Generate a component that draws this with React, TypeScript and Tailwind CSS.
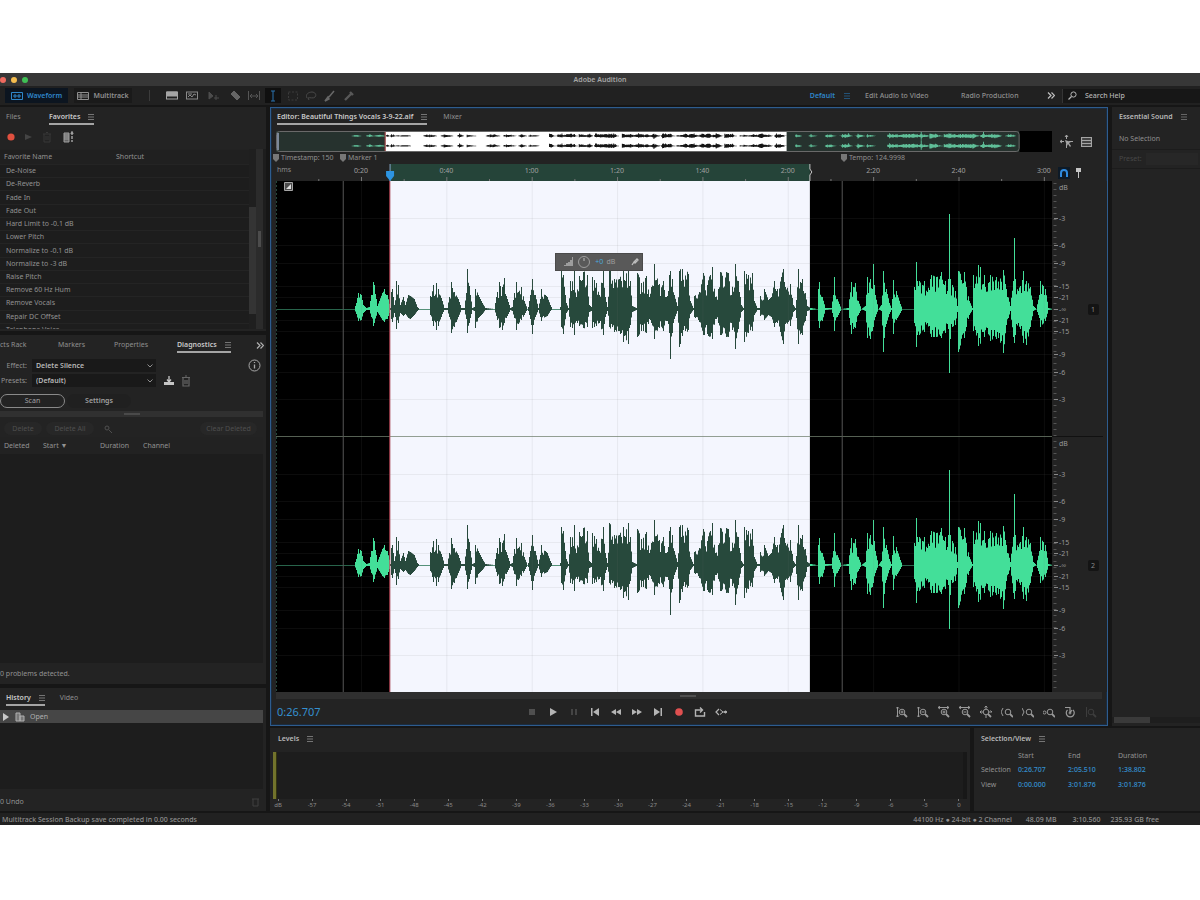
import React from 'react';

type Peak = [x: number, up: number, down: number];

const VIEW = 776;
const SEL_FROM = 114;
const SEL_TO = 534;

// Envelope of the recording: x in the 776 px wide view, height above and below the centre line
const points: Peak[] = [
  [0, 0, 0], [78, 0, 0], [80, 6, 5], [82, 16, 12], [85, 14, 11], [87, 4, 4], [90, 1, 1], [93, 2, 1], [95, 14, 8], [97, 27, 17],
  [98, 24, 14], [101, 3, 3], [103, 8, 6], [106, 16, 11], [108, 20, 13], [111, 14, 10], [114, 1, 1],
  [115, 17, 10], [116, 20, 13], [118, 4, 4], [120, 28, 20], [122, 24, 14], [124, 4, 4], [127, 12, 7], [129, 4, 5],
  [132, 14, 9], [134, 13, 10], [138, 10, 6], [141, 2, 2], [143, 0, 0], [153, 0, 0],
  [154, 13, 6], [157, 24, 17], [160, 26, 21], [162, 20, 17], [166, 8, 5], [168, 1, 1], [171, 1, 1],
  [173, 12, 8], [175, 27, 24], [178, 17, 18], [182, 10, 8], [185, 1, 1], [188, 1, 1], [190, 16, 10], [191, 40, 24],
  [194, 14, 9], [196, 1, 1], [198, 2, 2], [199, 20, 19], [202, 14, 9], [206, 6, 5], [209, 1, 1], [218, 0, 0],
  [220, 12, 7], [223, 27, 19], [226, 22, 21], [228, 31, 14], [230, 13, 9], [234, 1, 1], [236, 2, 2],
  [238, 16, 9], [240, 27, 21], [242, 17, 15], [245, 22, 11], [248, 8, 6], [251, 0, 0], [252, 2, 2],
  [254, 14, 10], [256, 30, 25], [259, 14, 8], [262, 1, 1], [264, 10, 8], [265, 20, 12], [269, 14, 8], [271, 12, 7],
  [274, 4, 2], [276, 0, 0], [283, 0, 0],
  [284, 2, 1], [285, 38, 18], [287, 34, 25], [290, 6, 4], [292, 1, 1], [294, 28, 18], [298, 40, 26], [300, 12, 12],
  [303, 33, 17], [307, 37, 19], [311, 34, 18], [313, 4, 3], [315, 2, 2], [316, 32, 19], [320, 26, 17], [323, 14, 14],
  [327, 38, 26], [329, 12, 8], [331, 2, 2], [333, 42, 18], [338, 30, 23], [343, 30, 22], [347, 38, 33], [352, 42, 35],
  [354, 28, 16], [356, 3, 3], [360, 1, 1], [361, 36, 28], [365, 26, 22], [370, 33, 24], [373, 12, 10],
  [375, 22, 14], [378, 45, 30], [382, 24, 18], [387, 28, 22], [390, 12, 12], [393, 34, 24], [394, 38, 50], [396, 30, 24],
  [398, 14, 10], [401, 3, 2], [403, 38, 38], [406, 40, 27], [412, 35, 21], [414, 8, 5], [417, 1, 1],
  [418, 13, 8], [423, 17, 13], [427, 36, 26], [431, 24, 25], [436, 42, 30], [439, 12, 10], [442, 20, 14], [444, 37, 26],
  [452, 36, 28], [455, 14, 14], [459, 45, 40], [462, 28, 20], [465, 4, 3], [467, 1, 1], [468, 38, 33], [472, 34, 24],
  [476, 36, 22], [478, 8, 6], [481, 1, 1], [483, 1, 1], [484, 13, 7], [488, 20, 11], [492, 9, 6], [495, 12, 8],
  [498, 28, 18], [501, 20, 14], [507, 40, 35], [509, 22, 15], [514, 25, 17], [517, 4, 3], [519, 1, 1],
  [522, 40, 35], [526, 30, 26], [529, 16, 12], [531, 3, 2], [534, 1, 1],
  [541, 0, 0], [542, 20, 12], [543, 27, 19], [546, 12, 12], [549, 1, 1], [555, 1, 0], [557, 14, 8], [558, 32, 22],
  [561, 10, 8], [565, 0, 0], [572, 1, 1], [575, 27, 25], [577, 22, 20], [579, 26, 19], [582, 8, 6], [585, 0, 0],
  [589, 3, 2], [591, 32, 29], [594, 30, 30], [596, 20, 22], [597, 45, 18], [599, 14, 8], [602, 0, 0], [605, 4, 2],
  [607, 38, 43], [610, 20, 15], [613, 6, 5], [615, 1, 1], [617, 29, 25], [620, 18, 11], [624, 5, 4], [626, 0, 0],
  [637, 0, 0], [638, 22, 14], [640, 47, 38], [643, 28, 26], [648, 28, 23], [651, 17, 14], [655, 34, 28], [660, 32, 28],
  [665, 37, 29], [669, 28, 24], [672, 30, 20], [673, 95, 64], [674, 30, 30], [676, 24, 18], [679, 18, 16], [681, 3, 3],
  [682, 38, 43], [688, 37, 29], [690, 22, 18], [693, 8, 6], [696, 1, 1], [697, 34, 22], [702, 44, 37], [708, 34, 28],
  [714, 34, 32], [720, 32, 30], [727, 39, 44], [730, 20, 16], [734, 3, 2], [737, 28, 28], [738, 71, 34], [739, 30, 26],
  [742, 18, 14], [747, 38, 34], [750, 28, 36], [754, 22, 18], [757, 3, 2], [760, 0, 0], [763, 14, 9], [764, 28, 18],
  [769, 20, 12], [772, 1, 1], [776, 0, 0],
];

const hash = (n: number) => {
  const s = Math.sin(n * 127.1) * 43758.5453;
  return s - Math.floor(s);
};

const column = (x: number): [number, number] => {
  let i = points.findIndex((p) => p[0] > x);
  if (i < 1) i = points.length - 1;
  const [x0, u0, d0] = points[i - 1];
  const [x1, u1, d1] = points[i];
  const t = Math.min(1, Math.max(0, (x - x0) / Math.max(1, x1 - x0)));
  const up = u0 + (u1 - u0) * t;
  const down = d0 + (d1 - d0) * t;
  const rough = x === x0 || up < 14 ? 1 : 0.5 + hash(x) * 0.55;
  return [up * rough, down * (0.25 + rough * 0.75)];
};

const wavePath = (from: number, to: number) => {
  let top = '';
  let bottom = '';
  for (let x = from; x < to; x++) {
    const [up, down] = column(x);
    top += `L${x} ${(-up).toFixed(1)}H${x + 1}`;
    bottom = `L${x + 1} ${down.toFixed(1)}H${x}` + bottom;
  }
  return `M${from} 0${top}${bottom}Z`;
};

const waveParts = [
  { d: wavePath(0, SEL_FROM), light: true },
  { d: wavePath(SEL_FROM, SEL_TO), light: false },
  { d: wavePath(SEL_TO, VIEW), light: true },
];

const favorites = [
  'De-Noise', 'De-Reverb', 'Fade In', 'Fade Out', 'Hard Limit to -0.1 dB', 'Lower Pitch', 'Normalize to -0.1 dB',
  'Normalize to -3 dB', 'Raise Pitch', 'Remove 60 Hz Hum', 'Remove Vocals', 'Repair DC Offset', 'Telephone Voice',
];

const times = ['0:20', '0:40', '1:00', '1:20', '1:40', '2:00', '2:20', '2:40', '3:00'];

const dbMarks: [string, number][] = [
  ['dB', 6], ['-3', 37], ['-6', 64], ['-9', 82], ['-15', 105], ['-21', 116], ['-∞', 128],
  ['-21', 139], ['-15', 150], ['-9', 173], ['-6', 191], ['-3', 218],
];

const levels = [
  'dB', '-57', '-54', '-51', '-48', '-45', '-42', '-39', '-36', '-33', '-30', '-27', '-24', '-21', '-18', '-15',
  '-12', '-9', '-6', '-3', '0',
];

interface IconProps {
  w?: number;
  h?: number;
  className?: string;
  children: React.ReactNode;
}

const Icon: React.FC<IconProps> = ({ w = 12, h = 12, className = '', children }) => (
  <svg width={w} height={h} viewBox={`0 0 ${w} ${h}`} fill="none" stroke="currentColor" className={`shrink-0 ${className}`} aria-hidden="true">
    {children}
  </svg>
);

const MenuIcon = ({ className = '' }: { className?: string }) => (
  <Icon w={6} h={6} className={className}>
    <path d="M0 .5h6M0 3h6M0 5.5h6" strokeWidth=".8" />
  </Icon>
);

const Lens = ({ x = 0 }: { x?: number }) => (
  <g transform={`translate(${x} 0)`}>
    <circle cx="6" cy="6" r="2.8" />
    <path d="M8 8l3 3" strokeWidth="1.8" />
  </g>
);

interface TabProps {
  label: string;
  active?: boolean;
  className?: string;
}

const Tab: React.FC<TabProps> = ({ label, active, className = '' }) => (
  <button
    type="button"
    className={`flex h-[15px] shrink-0 items-center gap-2 whitespace-nowrap border-b-2 ${
      active ? 'border-[#a5a5a5] font-semibold text-[#c9c9c9]' : 'border-transparent text-[#8f8f8f]'
    } ${className}`}
  >
    {label}
    {active && <MenuIcon className="text-[#8a8a8a]" />}
  </button>
);

const tools: { name: string; cls: string; icon: React.ReactNode }[] = [
  { name: 'Spectral frequency', cls: 'w-[18px] text-[#a5a5a5]', icon: <><rect x=".5" y="2" width="11" height="7" /><path d="M1 2h10v4H1z" fill="currentColor" /></> },
  { name: 'Spectral pitch', cls: 'w-[22px] text-[#8a8a8a]', icon: <><rect x=".5" y="2" width="11" height="7" /><path d="M2 7l2-2 2 2 2-3 2 1M2 4h4" /></> },
  { name: 'Move', cls: 'w-[22px] text-[#4c4c4c]', icon: <path d="M1 2l4 4-4 3zM8 5v5M6 8h5" fill="currentColor" /> },
  { name: 'Razor', cls: 'w-[20px] text-[#666]', icon: <path d="M2 4l3-3 6 6-3 3z" fill="currentColor" /> },
  { name: 'Slip', cls: 'w-[18px] text-[#565656]', icon: <path d="M.5 1v9M11.5 1v9M2 6h8M4 4L2 6l2 2M8 4l2 2-2 2" /> },
  { name: 'Time selection', cls: 'ml-[2px] w-[16px] mr-[2px] text-[#2a72ae]', icon: <path d="M4 1h4M4 11h4M6 1v10" /> },
  { name: 'Marquee', cls: 'w-[19px] text-[#3c3c3c]', icon: <path d="M1.5 2h9v8h-9z" strokeDasharray="2 1.5" /> },
  { name: 'Lasso', cls: 'w-[18px] text-[#4a4a4a]', icon: <path d="M2 8C0 4 4 2 7 2s5 3 3 5-5 0-7 1l1 2" /> },
  { name: 'Brush', cls: 'w-[20px] text-[#686868]', icon: <path d="M1 11l3-4 1 2zM5 7l5-6" strokeWidth="1.5" /> },
  { name: 'Healing', cls: 'w-[18px] text-[#585858]', icon: <path d="M2 10l6-6M7 2l3 3" strokeWidth="2.4" /> },
];

const transport: { name: string; cls?: string; icon: React.ReactNode }[] = [
  { name: 'Stop', cls: 'text-[#4f4f4f]', icon: <path d="M3 3h6v6H3z" fill="currentColor" stroke="none" /> },
  { name: 'Play', icon: <path d="M3 2l7 4-7 4z" fill="currentColor" stroke="none" /> },
  { name: 'Pause', cls: 'text-[#454545]', icon: <path d="M3 3h2v6H3zM7 3h2v6H7z" fill="currentColor" stroke="none" /> },
  { name: 'To start', icon: <path d="M2 2h1.5v8H2zM10 2v8L4 6z" fill="currentColor" stroke="none" /> },
  { name: 'Rewind', icon: <path d="M6 3v6L1 6zM11 3v6L6 6z" fill="currentColor" stroke="none" /> },
  { name: 'Fast forward', icon: <path d="M1 3v6l5-3zM6 3v6l5-3z" fill="currentColor" stroke="none" /> },
  { name: 'To end', icon: <path d="M8.5 2H10v8H8.5zM2 2v8l6-4z" fill="currentColor" stroke="none" /> },
  { name: 'Record', cls: 'text-[#e05050]', icon: <circle cx="6" cy="6" r="3.8" fill="currentColor" stroke="none" /> },
  { name: 'Loop', icon: <path d="M3 4H1.5v6h9V6M3 4h5M6 1.5L8.5 4 6 6.500" strokeWidth="1.4" /> },
  { name: 'Skip selection', icon: <><path d="M4 3L1 6l3 3M8 6h4" strokeWidth="1.2" /><path d="M5 3.5L8 6 5 8.500" /><circle cx="10.5" cy="6" r="1" fill="currentColor" /></> },
];

const zooms: { name: string; cls?: string; icon: React.ReactNode }[] = [
  { name: 'Zoom in amplitude', icon: <><path d="M1.5 1v10M0 2.5L1.5 1 3 2.5M0 9.5L1.5 11 3 9.5M4.5 6h3M6 4.5v3" /><Lens /></> },
  { name: 'Zoom out amplitude', icon: <><path d="M1.5 1v10M0 2.5L1.5 1 3 2.5M0 9.5L1.5 11 3 9.5M4.5 6h3" /><Lens /></> },
  { name: 'Zoom in time', icon: <><path d="M0 1.5h11M2 0L0 1.5 2 3M9 0l2 1.5L9 3M4.5 6h3M6 4.5v3" /><Lens /></> },
  { name: 'Zoom out time', icon: <><path d="M0 1.5h11M2 0L0 1.5 2 3M9 0l2 1.5L9 3M4.5 6h3" /><Lens /></> },
  { name: 'Zoom out full', icon: <><path d="M6 0v3M0 6h3M9 6h3M6 9v3M4.5 1.5L6 0l1.5 1.5M1.5 4.5L0 6l1.5 1.5M10.5 4.5L12 6" /><Lens /></> },
  { name: 'Zoom to in point', icon: <><path d="M2 2L0 6l2 4" /><Lens x={1} /></> },
  { name: 'Zoom to out point', icon: <><path d="M0 2l2 4-2 4" /><Lens x={1} /></> },
  { name: 'Zoom to selection', icon: <><circle cx="1.5" cy="6.5" r="1.5" /><Lens x={1} /></> },
  { name: 'Zoom timer', icon: <><path d="M3.5 4A4 4 0 1 0 9 4M6 7l2-3M6 1v6M1 1.500h5" strokeWidth="1.2" /><circle cx="6" cy="7" r="1" /></> },
  { name: 'Zoom selected track', cls: 'text-[#3d3d3d]', icon: <><path d="M1.5 1v10" /><Lens /></> },
];

const TitleBar = () => (
  <header className="grid h-[13px] grid-cols-3 items-center bg-[#373737]">
    <div className="flex gap-[5px]">
      <span className="size-[6px] rounded-full bg-[#ee6a5f]" />
      <span className="size-[6px] rounded-full bg-[#f5bd4f]" />
      <span className="size-[6px] rounded-full bg-[#3fbf55]" />
    </div>
    <h1 className="text-center font-semibold text-[#a5a5a5]">Adobe Audition</h1>
  </header>
);

const Toolbar = () => (
  <nav className="flex h-[19px] items-center bg-[#212121] text-[#8f8f8f]">
    <button type="button" className="ml-[5px] flex h-[15px] w-[63px] items-center justify-center gap-1 bg-[#0c1520] font-semibold text-[#2f86c9]">
      <Icon h={8}><path d="M.5.5h11v7H.5zM2 4h8M4 2v4M8 2v4" /></Icon>
      Waveform
    </button>
    <button type="button" className="ml-[6px] flex h-[15px] w-[58px] items-center justify-center gap-1 bg-[#1a1a1a] font-semibold">
      <Icon h={8}><path d="M.5.5h11v7H.5zM1 3h10M1 5h10M4 1v6" /></Icon>
      Multitrack
    </button>
    <span className="ml-[17px] mr-[13px] h-[11px] w-px bg-[#3c3c3c]" />
    {tools.map((t) => (
      <button key={t.name} type="button" aria-label={t.name} className={`flex h-[15px] shrink-0 items-center justify-center ${t.name === 'Time selection' ? 'bg-[#101010]' : ''} ${t.cls}`}>
        <Icon>{t.icon}</Icon>
      </button>
    ))}
    <div className="ml-auto flex items-center">
      <a href="#default" className="font-semibold text-[#2f86c9]">Default</a>
      <MenuIcon className="ml-[9px] mr-[15px] text-[#255f8e]" />
      <a href="#video" className="w-[96px] font-medium">Edit Audio to Video</a>
      <a href="#radio" className="w-[86px] font-medium">Radio Production</a>
      <button type="button" aria-label="More workspaces" className="w-[15px] text-[#c0c0c0]">
        <Icon w={8} h={7}><path d="M1 .5l3 3-3 3M4.5.5l3 3-3 3" strokeWidth="1.2" /></Icon>
      </button>
      <label className="flex h-[14px] w-[138px] items-center gap-2 border-l border-[#353535] bg-[#171717] pl-[5px] text-[#b5b5b5]">
        <Icon w={9} h={9}><circle cx="5.5" cy="3.5" r="2.6" /><path d="M3.5 5.5L.5 8.5" strokeWidth="1.3" /></Icon>
        <input type="text" aria-label="Search Help" placeholder="Search Help" className="w-24 bg-transparent font-medium placeholder:text-[#b5b5b5] focus:outline-none" />
      </label>
    </div>
  </nav>
);

const FavoritesPanel = () => (
  <section className="flex h-[224px] flex-col overflow-hidden bg-[#232323] pt-[3px]">
    <div className="flex pl-[6px]">
      <Tab label="Files" className="w-[43px]" />
      <Tab label="Favorites" active />
    </div>
    <div className="flex h-[24px] shrink-0 items-center gap-[6px] pl-[5px] text-[#444]">
      <button type="button" aria-label="Record favorite" className="text-[#e0503f]"><Icon><circle cx="6" cy="6" r="3.6" fill="currentColor" stroke="none" /></Icon></button>
      <button type="button" aria-label="Play favorite"><Icon><path d="M2 3l7 3-7 3z" fill="currentColor" stroke="none" /></Icon></button>
      <button type="button" aria-label="Delete favorite" className="text-[#383838]"><Icon><path d="M2 3h8M3 3v8h6V3M5 1.5h2M5 5v4M7 5v4" /></Icon></button>
      <button type="button" aria-label="Edit favorites" className="ml-1 text-[#a0a0a0]"><Icon><path d="M1 2h5v9H1zM1 4h5M1 6h5M1 8h5" fill="#666" /><path d="M9 1v3M9 5v3M9 9v2M8 3l1-2 1 2" strokeWidth="1.5" /></Icon></button>
    </div>
    <div className="flex h-[180px] shrink-0 overflow-hidden bg-[#1d1d1d]">
      <table className="h-[187px] grow border-collapse text-left text-[#929292]">
        <thead>
          <tr className="h-[15px] border-t border-[#222] bg-[#202020]">
            <th className="w-[112px] pl-1 font-normal">Favorite Name</th>
            <th className="pl-1 font-normal">Shortcut</th>
          </tr>
        </thead>
        <tbody>
          {favorites.map((f) => (
            <tr key={f} className="border-t border-[#242424]">
              <td className="pl-[6px]">{f}</td>
              <td />
            </tr>
          ))}
        </tbody>
      </table>
      <div className="w-[7px] bg-[#1f1f1f] pt-[58px]"><div className="h-[107px] bg-[#343434]" /></div>
      <div className="mr-[3px] w-[7px] bg-[#2b2b2b] px-[2px] pt-[82px]"><div className="h-4 bg-[#4c4c4c]" /></div>
    </div>
  </section>
);

interface PickerProps {
  id: string;
  label: string;
  value: string;
}

const Picker: React.FC<PickerProps> = ({ id, label, value }) => (
  <div className="flex h-[15px] items-center">
    <label htmlFor={id} className="w-[32px] pr-[5px] text-right text-[#929292]">{label}</label>
    <div className="grid w-[124px] items-center">
      <select id={id} className="col-start-1 row-start-1 h-[13px] appearance-none bg-[#191919] pl-1 font-semibold text-[#b8b8b8]">
        <option>{value}</option>
      </select>
      <Icon w={6} h={4} className="pointer-events-none col-start-1 row-start-1 mr-[3px] justify-self-end text-[#8f8f8f]"><path d="M.5.5L3 3l2.5-2.5" /></Icon>
    </div>
  </div>
);

const DiagnosticsPanel = () => (
  <section className="flex h-[349px] flex-col bg-[#232323] pt-[3px]">
    <div className="flex items-center">
      <Tab label="cts Rack" className="w-[58px]" />
      <Tab label="Markers" className="w-[56px]" />
      <Tab label="Properties" className="w-[63px]" />
      <Tab label="Diagnostics" active />
      <button type="button" aria-label="More tabs" className="ml-auto mr-[2px] text-[#b0b0b0]">
        <Icon w={8} h={7}><path d="M1 .5l3 3-3 3M4.5.5l3 3-3 3" strokeWidth="1.2" /></Icon>
      </button>
    </div>
    <div className="mt-[5px] flex items-center justify-between pr-[5px]">
      <Picker id="effect" label="Effect:" value="Delete Silence" />
      <button type="button" aria-label="Info" className="text-[#a8a8a8]"><Icon w={13} h={13}><circle cx="6.5" cy="6.5" r="5.5" /><path d="M6.5 3v1M6.5 5.5v4" strokeWidth="1.3" /></Icon></button>
    </div>
    <div className="flex items-center gap-[5px]">
      <Picker id="presets" label="Presets:" value="(Default)" />
      <button type="button" aria-label="Save preset" className="ml-[2px] text-[#c5c5c5]"><Icon><path d="M1 7h10v3H1z" fill="currentColor" stroke="none" /><path d="M6 1v6M4 4.5L6 7l2-2.5" strokeWidth="1.3" /></Icon></button>
      <button type="button" aria-label="Delete preset" className="text-[#666]"><Icon><path d="M2 2.5h8M3 3v8h6V3M5 1h2M5 5v4M7 5v4" strokeWidth="1.2" /></Icon></button>
    </div>
    <div className="mt-[6px] flex gap-[2px] text-[#a0a0a0]">
      <button type="button" className="h-[14px] w-[65px] rounded-full border border-[#8a8a8a]">Scan</button>
      <button type="button" className="h-[14px] w-[64px] rounded-full bg-[#202020] font-semibold">Settings</button>
    </div>
    <div className="mt-[3px] mr-[3px] flex h-[6px] items-center bg-[#303030] pl-[124px]"><span className="h-[2px] w-4 bg-[#4a4a4a]" /></div>
    <div className="mt-[5px] flex h-[13px] items-center gap-[4px] pr-[9px] text-[#4f4f4f]">
      <button type="button" className="ml-1 h-[13px] w-[38px] rounded-full bg-[#272727]">Delete</button>
      <button type="button" className="h-[13px] w-[48px] rounded-full bg-[#272727]">Delete All</button>
      <Icon w={10} h={10} className="ml-[5px]"><circle cx="4" cy="4" r="2" /><path d="M6 6l3 3" /></Icon>
      <button type="button" className="ml-auto h-[13px] w-[57px] rounded-full bg-[#272727]">Clear Deleted</button>
    </div>
    <div className="mt-[2px] mr-[3px] h-[226px] bg-[#1d1d1d]">
      <table className="w-full bg-[#222] text-left text-[#929292]">
        <thead>
          <tr className="h-[17px]">
            <th className="w-[43px] pl-1 font-normal">Deleted</th>
            <th className="w-[57px] font-normal">Start ▼</th>
            <th className="w-[43px] font-normal">Duration</th>
            <th className="font-normal">Channel</th>
          </tr>
        </thead>
      </table>
    </div>
    <p className="mt-[6px] text-[#929292]">0 problems detected.</p>
  </section>
);

const HistoryPanel = () => (
  <section className="flex grow flex-col bg-[#232323] pt-[3px] text-[#929292]">
    <div className="flex gap-[15px] pl-[6px]">
      <Tab label="History" active />
      <Tab label="Video" />
    </div>
    <div className="mt-[4px] mr-[3px] h-[79px] bg-[#1d1d1d]">
      <button type="button" className="flex h-[13px] w-full items-center gap-[5px] bg-[#464646] pl-[2px] text-[#b0b0b0]">
        <Icon w={8} h={8}><path d="M1 0l6 4-6 4z" fill="#c8c8c8" stroke="none" /></Icon>
        <Icon w={10} h={10}><path d="M1 1h4v8H1zM5 4h4v5H5z" fill="#777" /></Icon>
        Open
      </button>
    </div>
    <div className="flex grow items-center justify-between pr-[6px] pt-[4px]">
      0 Undo
      <button type="button" aria-label="Delete history" className="text-[#404040]"><Icon w={9} h={10}><path d="M1 2h7M2 2v7h5V2" /></Icon></button>
    </div>
  </section>
);

const MarkerFlag = () => (
  <Icon w={6} h={8} className="text-[#777]"><path d="M0 0h6v5L3 8 0 5z" fill="currentColor" stroke="none" /></Icon>
);

const Overview = () => (
  <div className="flex h-[21px] pr-[15px]">
    <svg className="h-[21px] grow bg-black" aria-label="Overview">
      <rect width="95.8%" height="21" fill="#26322e" />
      <rect x="14.1%" width="51.7%" height="21" fill="#fff" />
      <svg width="95.8%" height="21" viewBox="0 0 776 21" preserveAspectRatio="none">
        {[5, 15].map((y) => (
          <g key={y} transform={`translate(0 ${y}) scale(1 .06)`}>
            {waveParts.map((p, i) => <path key={i} d={p.d} fill={p.light ? '#5fbf98' : '#151515'} />)}
          </g>
        ))}
      </svg>
      <rect x="14%" width="1" height="21" fill="#b04a4a" />
      <rect x=".5" y=".5" width="95.7%" height="20" rx="3" fill="none" stroke="#696969" />
      <path d="M2 2v17" stroke="#7c8899" strokeWidth="2" />
    </svg>
    <div className="ml-[8px] flex w-[32px] items-center justify-between text-[#a5a5a5]">
      <button type="button" aria-label="Zoom navigator"><Icon w={13} h={13}><path d="M6.5 0v4M0 6.5h4M9 6.5h4M6.5 9v4M5 2l1.500-2L8 2M2 5L0 6.500 2 8" /><path d="M5 5l6 2-2 1 2 3-1 1-2-3-1 2z" fill="currentColor" stroke="none" /></Icon></button>
      <button type="button" aria-label="List view"><Icon w={11} h={10}><path d="M.5.5h10v9H.5zM1 3.5h9M1 6.5h9" strokeWidth="1.3" /></Icon></button>
    </div>
  </div>
);

const Ruler = () => (
  <div className="flex">
    <svg className="h-[17px] grow overflow-visible" aria-label="Time ruler">
      <rect width="100%" height="17" fill="#232323" />
      <rect x="14.7%" width="54.1%" height="17" fill="#254439" />
      <text x="1" y="8" fontSize="7" fill="#8a8a8a">hms</text>
      {times.map((t, i) => (
        <g key={t}>
          <text x={`${10.95 + i * 11}%`} y="9" fontSize="7" fill="#a0a0a0" textAnchor="middle">{t}</text>
          <rect x={`${10.95 + i * 11}%`} y="13" width="1" height="4" fill="#777" />
          <rect x={`${5.45 + i * 11}%`} y="15" width="1" height="2" fill="#777" />
        </g>
      ))}
      <svg x="14.7%" overflow="visible"><path d="M0 0v17" stroke="#86a8c8" /><path d="M-4 7h8v5l-4 5-4-5z" fill="#2d94e0" /></svg>
      <svg x="68.8%" overflow="visible"><path d="M0 0v5l2 3-2 3v6" fill="none" stroke="#c5c5c5" /></svg>
    </svg>
    <div className="flex w-[55px] items-center gap-[5px] pl-[6px]">
      <button type="button" aria-label="Snap" className="bg-[#0d1a27] p-px text-[#2f8be0]"><Icon w={10} h={10}><path d="M2 9V5a3 3 0 0 1 6 0v4" strokeWidth="2" /></Icon></button>
      <button type="button" aria-label="Add marker" className="text-[#c5c5c5]"><Icon w={8} h={10}><path d="M1 0h5v4H1zM3 4h1v6H3z" fill="currentColor" stroke="none" /></Icon></button>
    </div>
  </div>
);

const WaveView = () => (
  <div className="flex h-[511px]">
    <div className="relative grow bg-black">
      <svg className="block h-full w-full" aria-label="Waveform">
        <rect x="14.7%" width="54.1%" height="511" fill="#f4f6fe" />
        {[0, 256].map((y) => (
          <g key={y}>
            {dbMarks.slice(1).map(([, m], i) => <rect key={i} y={y + m} width="100%" height="1" fill="#777" opacity=".1" />)}
            <rect y={y + 128} width="100%" height="1" fill="#2f7a5b" opacity=".8" />
            <svg y={y} width="100%" height="256" viewBox="0 -128 776 256" preserveAspectRatio="none">
              {waveParts.map((p, i) => <path key={i} d={p.d} fill={p.light ? '#43df99' : '#27493c'} />)}
            </svg>
          </g>
        ))}
        {times.map((t, i) => <rect key={t} x={`${10.95 + i * 11}%`} width="1" height="511" fill="#777" opacity=".11" />)}
        <rect y="255" width="100%" height="1" fill="#71806f" opacity=".75" />
        <rect x="8.6%" width="1" height="511" fill="#565656" />
        <rect x="72.9%" width="1" height="511" fill="#565656" />
        <rect x="14.6%" width="1" height="511" fill="#c04c5c" />
        <path d="M.5 0v511" stroke="#24463a" strokeDasharray="2 2" />
        <path d="M8.5 1.5h8v8h-8z" fill="#4c4c4c" stroke="#a5a5a5" /><path d="M10 8l5-5v5z" fill="#ddd" />
      </svg>
      <div className="absolute left-[36%] top-[72px] flex h-[18px] w-[88px] items-center border border-[#4a4a4a] bg-[#595959] pl-[6px] pr-[3px] text-[#9d9d9d]">
        <Icon><path d="M1 10h1V9h2V7h2V6h2V4h2V1h1v9z" fill="currentColor" stroke="none" /></Icon>
        <Icon w={14} h={14} className="ml-[3px]"><circle cx="7" cy="7" r="5.5" /><path d="M7 3v3" strokeWidth="1.5" /></Icon>
        <span className="ml-[4px] text-[#4aa8dc]">+0</span><span className="ml-[3px]">dB</span>
        <Icon w={8} h={8} className="ml-auto text-[#c0c0c0]"><path d="M1 7l2-3M3 4l3-3 1 1-3 3z" strokeWidth="1.3" /></Icon>
      </div>
    </div>
    <svg className="h-[511px] w-[55px] shrink-0" aria-label="Amplitude scale">
      <rect width="55" height="511" fill="#232323" />
      <path d="M3 2v509" stroke="#555" strokeWidth="3" strokeDasharray="1 5" />
      <rect y="255" width="51" height="1" fill="#111" />
      {[0, 256].map((y, ch) => (
        <g key={y}>
          {dbMarks.map(([label, m], i) => (
            <g key={i}>
              {i > 0 && <rect x="2" y={y + m} width="4" height="1" fill="#888" />}
              <text x="7" y={y + m + 3} fontSize="7" fill="#999">{label}</text>
            </g>
          ))}
          <rect x="36" y={y + 123} width="11" height="11" rx="2" fill="#141414" />
          <text x="41" y={y + 131} fontSize="7" fill="#8a8a8a" textAnchor="middle">{ch + 1}</text>
        </g>
      ))}
    </svg>
  </div>
);

const EditorPanel = () => (
  <section className="flex min-w-0 grow flex-col border border-[#2e5c8e] bg-[#232323] shadow-[inset_0_0_0_1px_#1b2b3d]">
    <div className="flex gap-[16px] pl-[6px] pt-[2px]">
      <Tab label="Editor: Beautiful Things Vocals 3-9-22.aif" active />
      <Tab label="Mixer" />
    </div>
    <div className="mt-[6px] pl-[5px]">
      <Overview />
      <div className="mr-[55px] -ml-[3px] flex h-[12px] items-center text-[#8f8f8f]">
        <div className="flex w-[8.6%] items-center gap-[2px] whitespace-nowrap"><MarkerFlag />Timestamp: 150</div>
        <div className="flex w-[64.3%] items-center gap-[2px]"><MarkerFlag />Marker 1</div>
        <div className="flex items-center gap-[2px] whitespace-nowrap"><MarkerFlag />Tempo: 124.9998</div>
      </div>
      <Ruler />
      <WaveView />
    </div>
    <div className="mx-[5px] flex h-[7px] items-center bg-[#2f2f2f] pl-[404px]"><span className="h-[2px] w-4 bg-[#505050]" /></div>
    <div className="flex h-[26px] items-center pr-[6px] text-[#b5b5b5]">
      <output className="w-[250px] pl-[6px] text-[11px] text-[#3490d0]">0:26.707</output>
      {transport.map((t) => (
        <button key={t.name} type="button" aria-label={t.name} className={`flex w-[21px] justify-center ${t.cls ?? ''}`}><Icon>{t.icon}</Icon></button>
      ))}
      <div className="ml-auto flex text-[#9a9a9a]">
        {zooms.map((z) => (
          <button key={z.name} type="button" aria-label={z.name} className={`flex w-[21px] justify-center ${z.cls ?? ''}`}><Icon>{z.icon}</Icon></button>
        ))}
      </div>
    </div>
  </section>
);

const EssentialSound = () => (
  <aside className="flex w-[88px] shrink-0 flex-col bg-[#232323] text-[#8f8f8f]">
    <h2 className="flex h-[18px] items-center gap-2 whitespace-nowrap pl-[7px] pt-[2px] font-semibold text-[#b8b8b8]">Essential Sound <MenuIcon className="text-[#777]" /></h2>
    <p className="mt-[3px] flex h-[22px] items-center border-b border-[#1c1c1c] pl-[7px]">No Selection</p>
    <div className="flex h-[19px] items-center gap-1 border-b border-[#1c1c1c] pl-[7px] text-[#474747]">
      <label htmlFor="preset">Preset:</label>
      <input id="preset" type="text" disabled className="h-[12px] w-[52px] bg-[#272727]" />
    </div>
    <div className="mt-auto mb-[3px] h-[6px] bg-[#1e1e1e]"><div className="ml-[2px] h-[6px] w-9 bg-[#3a3a3a]" /></div>
  </aside>
);

const LevelsPanel = () => (
  <section className="flex min-w-0 grow flex-col bg-[#232323]">
    <h2 className="flex h-[22px] items-center gap-2 pl-[8px] font-semibold text-[#b8b8b8]">Levels <MenuIcon className="text-[#8a8a8a]" /></h2>
    <div className="mx-[3px] mt-[2px] flex h-[47px] border-r-4 border-[#181818] bg-[#1d1d1d]">
      <div className="w-[4px] border-r border-[#33340f] bg-[#72732c]" />
    </div>
    <div className="mr-[3px] flex justify-between text-[6px] text-[#8a8a8a]">
      {levels.map((l) => (
        <div key={l} className="flex w-[16px] flex-col items-center leading-[8px]">
          <span className="h-[2px] w-px bg-[#777]" />
          {l}
        </div>
      ))}
    </div>
  </section>
);

const SelectionView = () => (
  <section className="w-[226px] shrink-0 bg-[#232323] pl-[7px] text-[#929292]">
    <h2 className="flex h-[22px] items-center gap-2 font-semibold text-[#b8b8b8]">Selection/View <MenuIcon className="text-[#8a8a8a]" /></h2>
    <table className="text-left">
      <thead>
        <tr className="h-[12px]">
          <td className="w-[37px]" />
          <th className="w-[50px] font-normal">Start</th>
          <th className="w-[50px] font-normal">End</th>
          <th className="w-[50px] font-normal">Duration</th>
        </tr>
      </thead>
      <tbody className="font-medium text-[#3490d0]">
        <tr className="h-[15px]"><th className="font-normal text-[#929292]">Selection</th><td>0:26.707</td><td>2:05.510</td><td>1:38.802</td></tr>
        <tr className="h-[15px]"><th className="font-normal text-[#929292]">View</th><td>0:00.000</td><td>3:01.876</td><td>3:01.876</td></tr>
      </tbody>
    </table>
  </section>
);

const App: React.FC = () => {
  return (
    <div className="min-h-screen bg-white pt-[73px] font-['Noto_Sans','Open_Sans',sans-serif] text-[7px] leading-[10px]">
      <TitleBar />
      <Toolbar />
      <div className="bg-[#161616]">
        <main className="flex gap-[4px] pt-[2px]">
          <div className="flex w-[266px] shrink-0 flex-col gap-[4px]">
            <FavoritesPanel />
            <DiagnosticsPanel />
            <HistoryPanel />
          </div>
          <div className="flex min-w-0 grow flex-col gap-[2px]">
            <div className="flex gap-[4px]">
              <EditorPanel />
              <EssentialSound />
            </div>
            <div className="flex h-[83px] gap-[4px]">
              <LevelsPanel />
              <SelectionView />
            </div>
          </div>
        </main>
        <footer className="mt-[2px] flex h-[12px] items-center bg-[#212121] pl-[2px] pt-px font-medium text-[#8f8f8f]">
          <span>Multitrack Session Backup save completed in 0.00 seconds</span>
          <span className="ml-auto">44100 Hz ● 24-bit ● 2 Channel</span>
          <span className="ml-[14px]">48.09 MB</span>
          <span className="ml-[16px]">3:10.560</span>
          <span className="ml-[10px] mr-[41px]">235.93 GB free</span>
        </footer>
      </div>
    </div>
  );
};

export default App;
